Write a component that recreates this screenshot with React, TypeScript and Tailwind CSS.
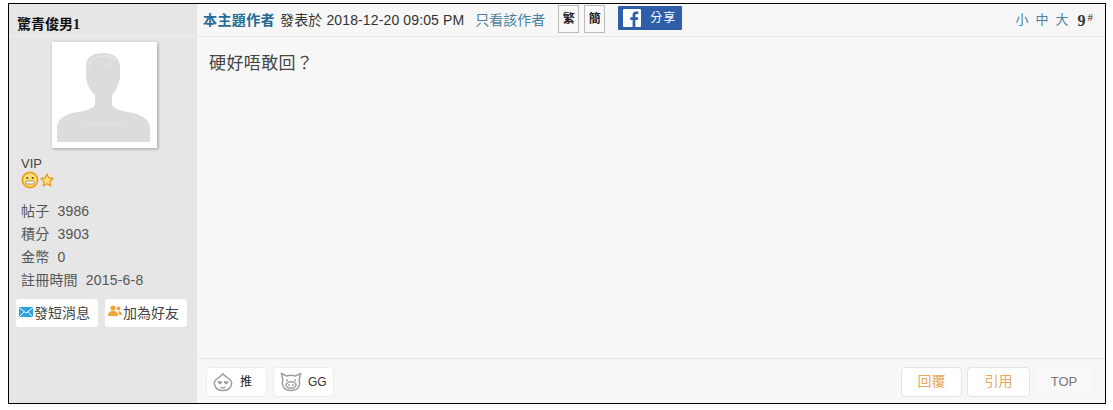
const tc = { fontFamily: '"Liberation Sans", "Noto Sans CJK TC", sans-serif' };

function Avatar() {
  return (
    <div className="w-[105px] h-[106px] bg-white shadow-[1px_1px_3px_rgba(0,0,0,0.3)] p-[3px] ml-[43px]">
      <svg viewBox="0 0 99 100" className="w-full h-full block">
        <path fill="#dcdcdc" d="M2 97 V82 C3 75 7 72 14 69 C24 66 36 66 40 60 V50 C35 46 31 38 31 30 L31 22 C31 12 38 8 48 8 C58 8 65 12 65 22 L65 30 C65 38 61 46 57 50 V60 C61 66 72 66 82 69 C89 72 94 75 95 82 V97 Z" />
        <path fill="none" stroke="#ececec" strokeWidth="0.8" d="M33 22 C35 13 44 11 52 11 C58 12 62 14 64 18 M50 22 C54 20 58 17 60 14" />
        <path fill="none" stroke="#e4e4e4" strokeWidth="1" d="M14 72 C30 82 66 82 84 72" />
      </svg>
    </div>
  );
}

function Face() {
  return (
    <svg width="18" height="18" viewBox="0 0 18 18">
      <circle cx="9" cy="9" r="7.6" fill="#fbe27a" stroke="#f29a1c" strokeWidth="1.7" />
      <circle cx="6.3" cy="7" r="1.1" fill="#6b4a1a" />
      <circle cx="11.7" cy="7" r="1.1" fill="#6b4a1a" />
      <rect x="4.5" y="10" width="9" height="3" rx="1.4" fill="#fff" stroke="#8a6a2a" strokeWidth="0.7" />
    </svg>
  );
}

function Star() {
  return (
    <svg width="14" height="14" viewBox="0 0 14 14">
      <path d="M7 1 L8.8 5 L13 5.5 L9.9 8.4 L10.8 12.8 L7 10.6 L3.2 12.8 L4.1 8.4 L1 5.5 L5.2 5 Z" fill="#fde58a" stroke="#ef9d1e" strokeWidth="1.4" strokeLinejoin="round" />
    </svg>
  );
}

function Mail() {
  return (
    <svg width="14" height="10" viewBox="0 0 14 10">
      <rect width="14" height="10" rx="1" fill="#2ba3dc" />
      <path d="M0.5 1 L7 6 L13.5 1 M0.5 9.5 L5 5 M13.5 9.5 L9 5" fill="none" stroke="#fff" strokeWidth="1" />
    </svg>
  );
}

function Friends() {
  return (
    <svg width="14" height="12" viewBox="0 0 14 12">
      <circle cx="5" cy="3" r="2.6" fill="#f2a33a" />
      <path d="M0 11 C0 7 2 6 5 6 C8 6 10 7 10 11 Z" fill="#f2a33a" />
      <circle cx="10.5" cy="3.5" r="2" fill="#f2a33a" />
      <path d="M10.8 10 H14 C14 7.5 12.8 6.2 10.2 6.2 C10.8 7.4 10.8 8.6 10.8 10 Z" fill="#f2a33a" />
    </svg>
  );
}

function PushIcon() {
  return (
    <svg width="20" height="20" viewBox="0 0 20 20" fill="none" stroke="#a0a0a0" strokeWidth="1.5">
      <path d="M10 1.5 C10.5 3.5 13 4.5 15 6 C18 8 19 10.5 18.5 12.5 C17.5 16.5 14 18.5 10 18.5 C6 18.5 2.5 16.5 1.5 12.5 C1 10.5 2 8 5 6 C7 4.5 9.5 3.5 10 1.5 Z" />
      <path d="M4.6 9.6 C5.2 8.6 6.6 8.8 7 9.6 C7.4 8.8 8.6 8.6 9.2 9.6 C9.6 10.8 8 12 7 12.6 C6 12 4.2 10.8 4.6 9.6 Z" fill="#a0a0a0" stroke="none" />
      <path d="M10.8 9.6 C11.4 8.6 12.8 8.8 13.2 9.6 C13.6 8.8 14.8 8.6 15.4 9.6 C15.8 10.8 14.2 12 13.2 12.6 C12.2 12 10.4 10.8 10.8 9.6 Z" fill="#a0a0a0" stroke="none" />
      <path d="M7.5 15 C9 16 11 16 12.5 15" />
    </svg>
  );
}

function PigIcon() {
  return (
    <svg width="22" height="20" viewBox="0 0 22 20" fill="none" stroke="#a0a0a0" strokeWidth="1.5">
      <path d="M1.5 1.5 L6.5 4 C9 3.2 13 3.2 15.5 4 L20.5 1.5 L19.2 8 C20.6 12.5 19 18.5 11 18.5 C3 18.5 1.4 12.5 2.8 8 Z" />
      <ellipse cx="11" cy="13" rx="5" ry="3.2" />
      <circle cx="9" cy="13" r="1" fill="#a0a0a0" stroke="none" />
      <circle cx="13" cy="13" r="1" fill="#a0a0a0" stroke="none" />
      <circle cx="7" cy="8.2" r="1" fill="#a0a0a0" stroke="none" />
      <circle cx="15" cy="8.2" r="1" fill="#a0a0a0" stroke="none" />
    </svg>
  );
}

export default function App() {
  return (
    <div className="w-[1113px] h-[410px] bg-white pl-[8px] pt-[3px]" style={tc}>
      <div className="w-[1098px] h-[401px] border border-black flex text-[14px] text-[#444]">
        <aside className="w-[188px] shrink-0 bg-[#e6e6e6] flex flex-col">
          <div className="h-[33px] shrink-0 border-b border-[#efefef] pl-[8px] pt-[12px] text-[14px] leading-[16px] font-bold text-[#111]">
            驚青俊男<span style={{ fontFamily: '"Liberation Serif", serif' }}>1</span>
          </div>
          <div className="pt-[5px]">
            <Avatar />
          </div>
          <div className="pl-[12px] pt-[9px] text-[13px] leading-[14px]">
            <div>VIP</div>
            <div className="flex items-center gap-[1px] h-[18px]">
              <Face />
              <Star />
            </div>
          </div>
          <dl className="pl-[12px] pt-[11px] text-[14px] leading-[23px] tracking-[0.2px] text-[#555]">
            <div className="flex gap-[8px]"><dt>帖子</dt><dd>3986</dd></div>
            <div className="flex gap-[8px]"><dt>積分</dt><dd>3903</dd></div>
            <div className="flex gap-[8px]"><dt>金幣</dt><dd>0</dd></div>
            <div className="flex gap-[8px]"><dt>註冊時間</dt><dd>2015-6-8</dd></div>
          </dl>
          <div className="flex gap-[7px] pl-[7px] pt-[7px]">
            <div className="w-[82px] h-[28px] bg-white rounded-[3px] flex items-center pl-[3px] text-[14px]">
              <span className="-mt-[3px] mr-px"><Mail /></span>發短消息
            </div>
            <div className="w-[82px] h-[28px] bg-white rounded-[3px] flex items-center pl-[3px] text-[14px]">
              <span className="-mt-[4px] mr-px"><Friends /></span>加為好友
            </div>
          </div>
        </aside>
        <main className="flex-1 min-w-0 bg-[#f7f7f7] flex flex-col">
          <header className="h-[33px] shrink-0 border-b border-[#e8e8e8] flex items-start pl-[6px] pr-[12px]">
            <span className="text-[14px] leading-[16px] font-bold text-[#246b94] mt-[8px] tracking-[0.4px]">本主題作者</span>
            <span className="text-[14px] leading-[16px] text-[#333] mt-[8px] ml-[5px] tracking-[0.13px]">發表於 2018-12-20 09:05 PM</span>
            <span className="text-[14px] leading-[16px] text-[#4a7f9f] mt-[8px] ml-[11px]">只看該作者</span>
            <span className="w-[21px] h-[28px] mt-[1px] ml-[13px] border border-[#bbb] bg-[#f9f9f9] flex items-center justify-center text-[12px] font-bold text-[#222]">繁</span>
            <span className="w-[21px] h-[28px] mt-[1px] ml-[5px] border border-[#bbb] bg-[#f9f9f9] flex items-center justify-center text-[12px] font-bold text-[#222]">簡</span>
            <span className="w-[64px] h-[24px] mt-[2px] ml-[13px] bg-[#2f5ea8] rounded-[1px] flex items-center pl-[5px] text-[12px] text-white">
              <svg width="18" height="18" viewBox="0 0 18 18">
                <rect width="18" height="18" rx="1" fill="#fff" />
                <path d="M12.4 18 V11 H14.8 L15.2 8.2 H12.4 V6.5 C12.4 5.6 12.7 5 14 5 H15.3 V2.6 C14.8 2.5 14 2.4 13.1 2.4 C11 2.4 9.6 3.7 9.6 6.1 V8.2 H7.3 V11 H9.6 V18 Z" fill="#2f5ea8" />
              </svg>
              <span className="ml-[9px] tracking-[1px]">分享</span>
            </span>
            <span className="ml-auto mt-[8px] text-[13px] leading-[16px] text-[#4a7f9f] flex gap-[7px]">
              <span>小</span><span>中</span><span>大</span>
            </span>
            <span className="ml-[9px] mt-[8px] text-[16px] leading-[18px] font-bold text-[#333]" style={{ fontFamily: '"Liberation Serif", serif' }}>
              9<sup className="text-[11px] font-normal align-baseline relative -top-[5px] ml-[2px]">#</sup>
            </span>
          </header>
          <div className="flex-1 pl-[12px] pt-[16px] text-[17px] leading-[22px] text-[#444] tracking-[0.4px]">硬好唔敢回？</div>
          <footer className="h-[45px] shrink-0 border-t border-[#e8e8e8] flex items-center pl-[9px] pr-[12px] pt-px">
            <div className="w-[61px] h-[30px] bg-white border border-[#ececec] rounded-[4px] flex items-center pl-[6px] text-[12px] text-[#222]">
              <PushIcon /><span className="ml-[7px]">推</span>
            </div>
            <div className="w-[61px] h-[30px] ml-[6px] bg-white border border-[#ececec] rounded-[4px] flex items-center pl-[6px] text-[12px] text-[#333]">
              <PigIcon /><span className="ml-[6px]">GG</span>
            </div>
            <div className="ml-auto w-[61px] h-[30px] bg-white border border-[#e4e4e4] rounded-[4px] flex items-center justify-center text-[14px] text-[#e8a860]">回覆</div>
            <div className="ml-[5px] w-[63px] h-[30px] bg-white border border-[#e4e4e4] rounded-[4px] flex items-center justify-center text-[14px] text-[#e8a860]">引用</div>
            <div className="ml-[5px] w-[58px] h-[30px] bg-[#f9f9f9] rounded-[4px] flex items-center justify-center text-[13px] text-[#777]">TOP</div>
          </footer>
        </main>
      </div>
    </div>
  );
}
